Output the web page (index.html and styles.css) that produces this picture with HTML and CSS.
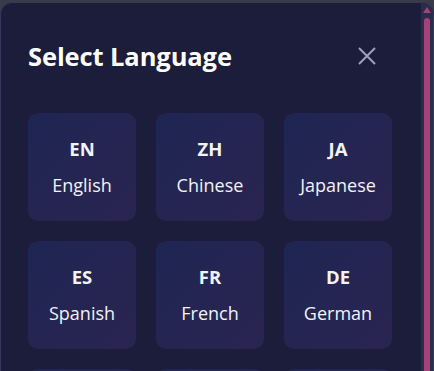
FILE: index.html
```
<!DOCTYPE html>
<html>
	<head>
		<title>Select Language</title>
		<link rel="stylesheet" href="styles.css">
	</head>
	<body>
		<div class="modal">
			<div class="modalBody">
				<div class="modalHeader">
					<h2 class="modalTitle">Select Language</h2>
					<button class="closeButton" aria-label="Close">
						<svg width="20" height="20" viewBox="0 0 20 20">
							<path d="M2 2 L18 18 M18 2 L2 18" stroke="currentColor" stroke-width="2" fill="none"></path>
						</svg>
					</button>
				</div>
				<div class="languageGrid">
					<button class="languageCard"><span class="code">EN</span><span class="name">English</span></button>
					<button class="languageCard"><span class="code">ZH</span><span class="name">Chinese</span></button>
					<button class="languageCard"><span class="code">JA</span><span class="name">Japanese</span></button>
					<button class="languageCard"><span class="code">ES</span><span class="name">Spanish</span></button>
					<button class="languageCard"><span class="code">FR</span><span class="name">French</span></button>
					<button class="languageCard"><span class="code">DE</span><span class="name">German</span></button>
					<button class="languageCard"></button>
					<button class="languageCard"></button>
					<button class="languageCard"></button>
				</div>
			</div>
			<div class="scrollBar">
				<div class="scrollArrow"></div>
				<div class="scrollThumb"></div>
			</div>
		</div>
	</body>
</html>
```

FILE: styles.css
```
html, body {
	margin: 0;
	height: 100%;
	overflow: hidden;
}

body {
	background-color: #3a3a48;
	padding-top: 2px;
	font-family: "Open Sans", "Noto Sans", sans-serif;
}

.modal {
	box-sizing: border-box;
	width: 434px;
	height: 470px;
	display: flex;
	overflow: hidden;
	background-color: #1b1d3a;
	border: 1px solid #34385a;
	border-radius: 12px;
}

.modalBody {
	flex: 1;
	padding: 35px 29px 40px 27px;
}

.scrollBar {
	width: 12px;
	display: flex;
	flex-direction: column;
	align-items: center;
	background-color: #2a2d49;
	padding-top: 4px;
}

.scrollArrow {
	width: 0;
	height: 0;
	border-left: 4px solid transparent;
	border-right: 4px solid transparent;
	border-bottom: 6px solid #a3437a;
	margin-bottom: 5px;
}

.scrollThumb {
	width: 6px;
	height: 400px;
	border-radius: 3px;
	background-color: #a3437a;
}

.modalHeader {
	display: flex;
	align-items: center;
	justify-content: space-between;
	height: 36px;
	margin-bottom: 39px;
}

.modalTitle {
	margin: 0;
	font-size: 25.5px;
	line-height: 32px;
	font-weight: 700;
	letter-spacing: -0.1px;
	color: #ffffff;
}

.closeButton {
	width: 36px;
	height: 36px;
	margin-right: 7px;
	padding: 0;
	border: none;
	background: none;
	color: #9ea1b8;
	display: flex;
	align-items: center;
	justify-content: center;
}

.languageGrid {
	display: grid;
	grid-template-columns: repeat(3, 108px);
	grid-auto-rows: 108px;
	gap: 20px;
}

.languageCard {
	display: flex;
	flex-direction: column;
	align-items: center;
	justify-content: center;
	gap: 12px;
	border: none;
	border-radius: 10px;
	background: linear-gradient(135deg, #1e2653 0%, #2b2451 100%);
	color: #f2f2f7;
	font-family: inherit;
	padding: 0;
}

.languageCard .code {
	font-size: 18.5px;
	line-height: 24px;
	font-weight: 700;
}

.languageCard .name {
	font-size: 18px;
	line-height: 24px;
}
```
